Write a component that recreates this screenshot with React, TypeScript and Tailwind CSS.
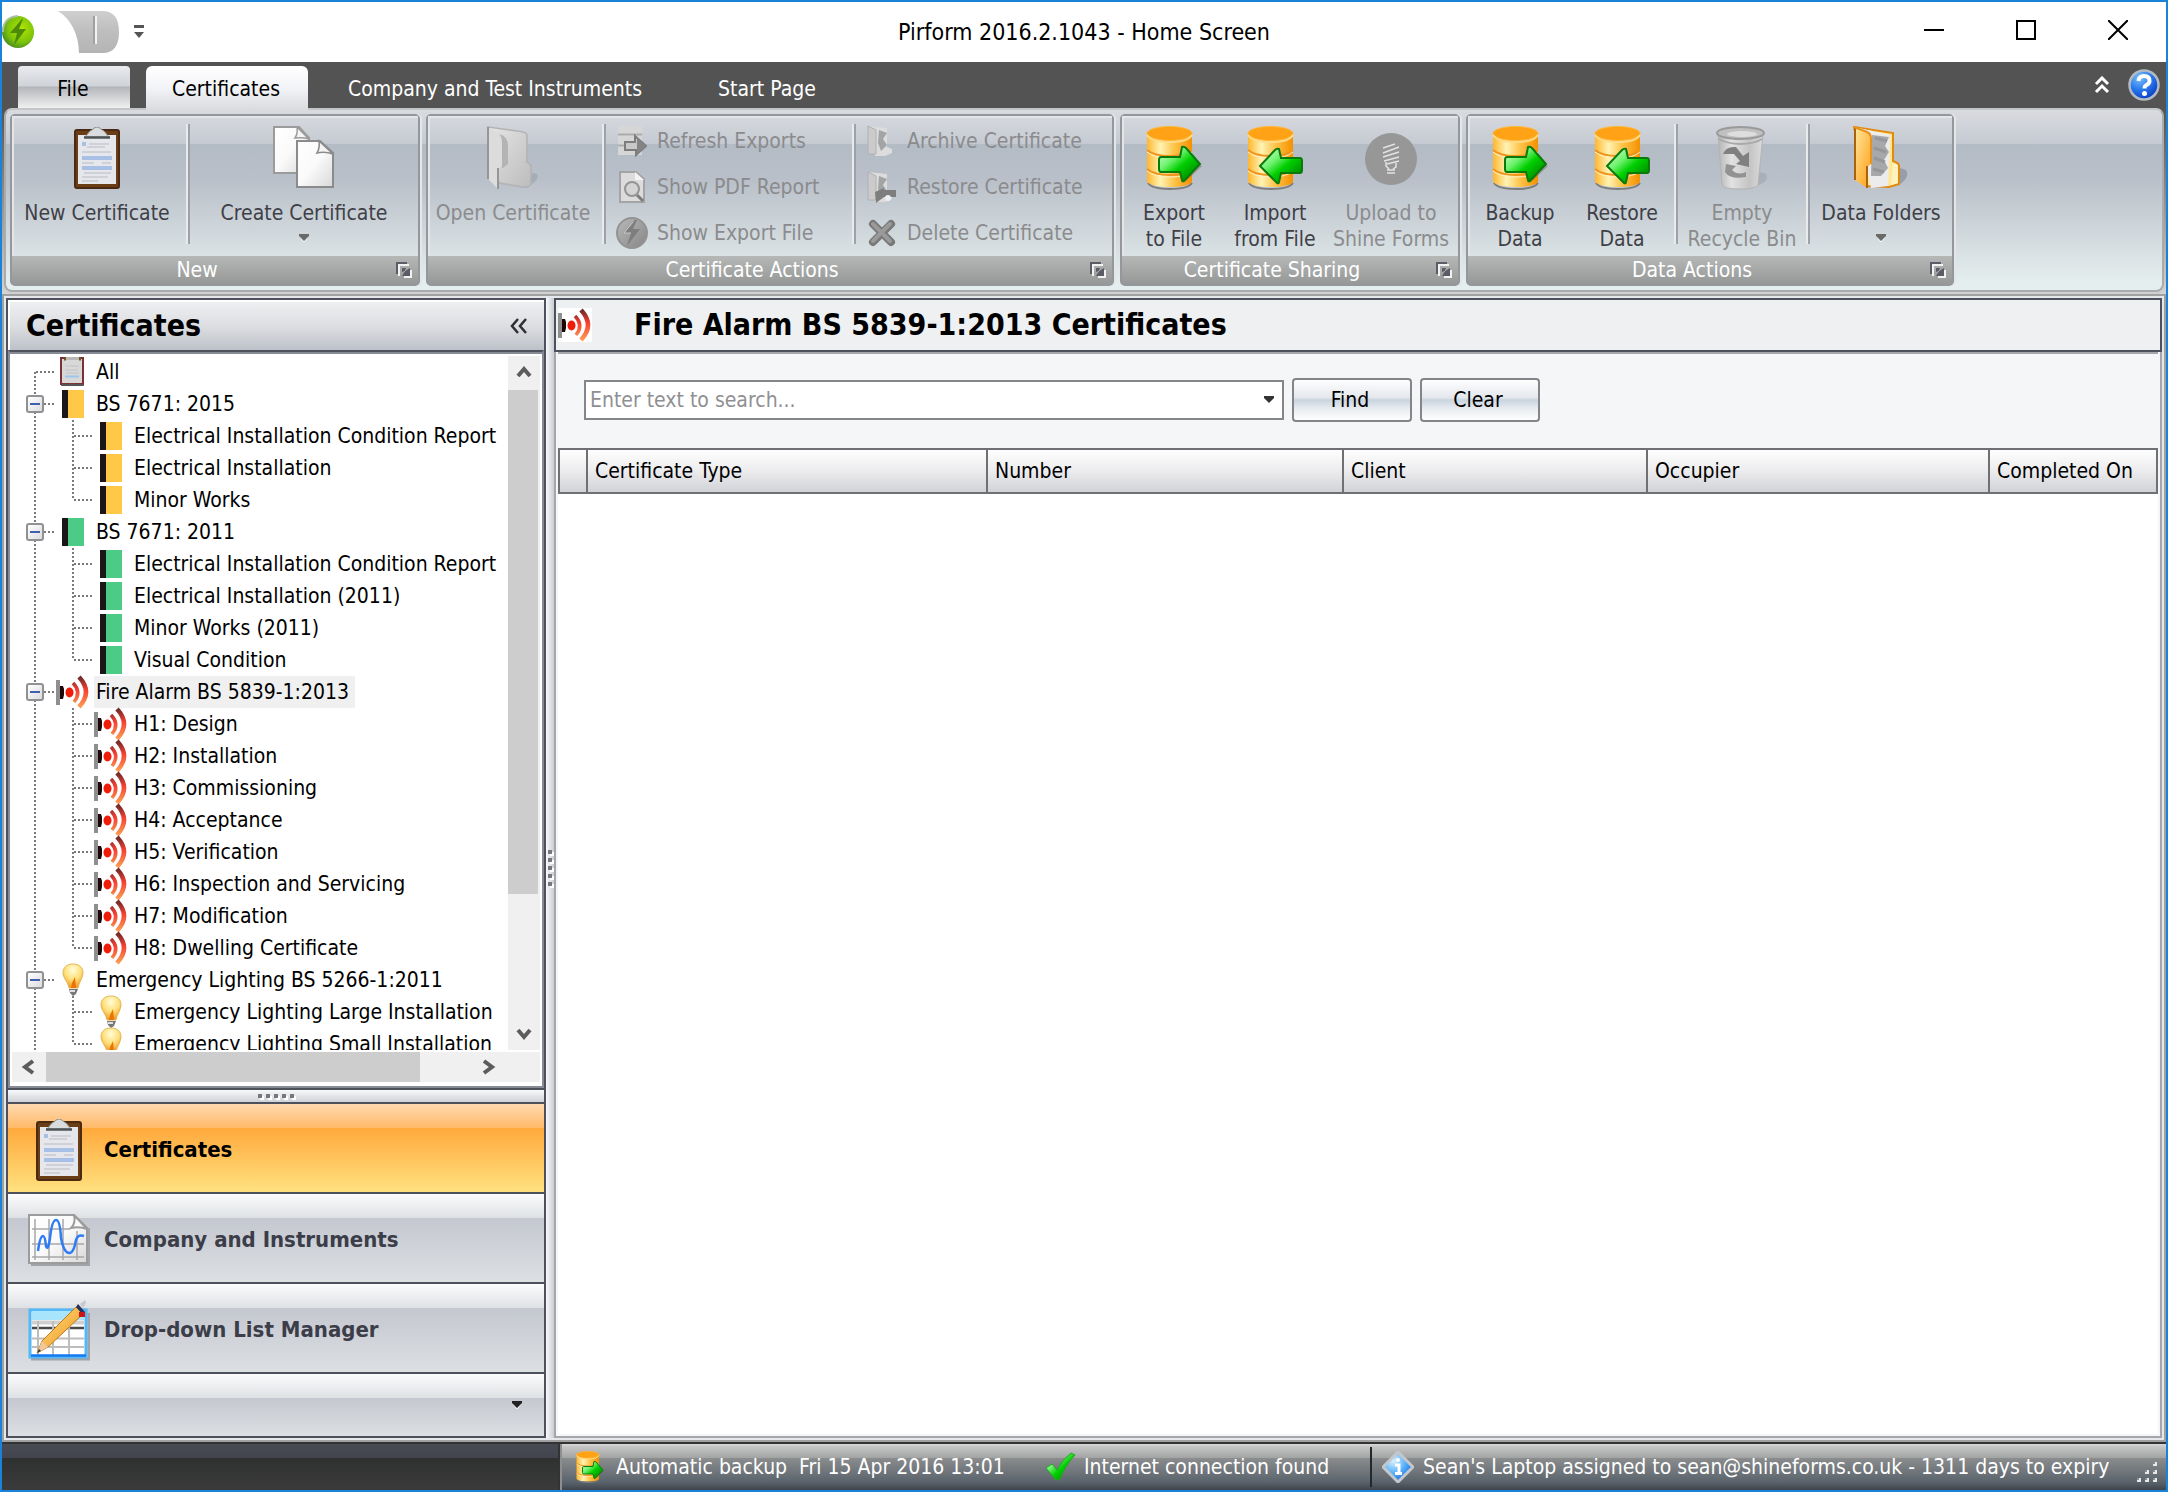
import type { ReactNode } from "react";

/* ---------- icons ---------- */

function Defs() {
  return (
    <svg width="0" height="0" className="absolute" aria-hidden="true">
      <defs>
        <linearGradient id="db" x1="0" x2="1" y1="0" y2="0">
          <stop offset="0" stopColor="#ffb62e" />
          <stop offset=".3" stopColor="#fff3b4" />
          <stop offset=".6" stopColor="#ffc44a" />
          <stop offset="1" stopColor="#f59000" />
        </linearGradient>
        <linearGradient id="green" x1="0" x2="1" y1="0" y2="1">
          <stop offset="0" stopColor="#e0ffe0" />
          <stop offset=".35" stopColor="#6cf26c" />
          <stop offset=".55" stopColor="#00cf00" />
          <stop offset="1" stopColor="#006a00" />
        </linearGradient>
        <linearGradient id="wave" gradientUnits="userSpaceOnUse" x1="0" x2="0" y1="2" y2="32">
          <stop offset="0" stopColor="#6a2a2a" />
          <stop offset=".4" stopColor="#f23c30" />
          <stop offset="1" stopColor="#ff9c52" />
        </linearGradient>
        <linearGradient id="paper" x1="0" x2="1" y1="0" y2="1">
          <stop offset="0" stopColor="#ffffff" />
          <stop offset=".5" stopColor="#fafafa" />
          <stop offset="1" stopColor="#d8d8d8" />
        </linearGradient>
        <linearGradient id="grey" x1="0" x2="1" y1="0" y2="1">
          <stop offset="0" stopColor="#e6e6e6" />
          <stop offset="1" stopColor="#bcbcbc" />
        </linearGradient>
        <linearGradient id="greydark" x1="0" x2="1" y1="0" y2="1">
          <stop offset="0" stopColor="#b9b9b9" />
          <stop offset="1" stopColor="#868686" />
        </linearGradient>
        <linearGradient id="bin" x1="0" x2="1" y1="0" y2="0">
          <stop offset="0" stopColor="#b4b4b4" />
          <stop offset=".3" stopColor="#e2e2e2" />
          <stop offset=".7" stopColor="#c4c4c4" />
          <stop offset="1" stopColor="#dcdcdc" />
        </linearGradient>
        <linearGradient id="folder" x1="0" x2="1" y1="0" y2="1">
          <stop offset="0" stopColor="#ffe9a0" />
          <stop offset="1" stopColor="#ff9d14" />
        </linearGradient>
        <radialGradient id="bulb" cx=".5" cy=".25" r=".8">
          <stop offset="0" stopColor="#fffdd8" />
          <stop offset=".5" stopColor="#ffe07a" />
          <stop offset="1" stopColor="#f08a10" />
        </radialGradient>
        <radialGradient id="info" cx=".35" cy=".3" r=".9">
          <stop offset="0" stopColor="#d8f2ff" />
          <stop offset=".5" stopColor="#4aa8f8" />
          <stop offset="1" stopColor="#0a3cc0" />
        </radialGradient>
        <radialGradient id="help" cx=".35" cy=".25" r=".8">
          <stop offset="0" stopColor="#7cc0f8" />
          <stop offset=".5" stopColor="#2a7cee" />
          <stop offset="1" stopColor="#0838c0" />
        </radialGradient>
        <radialGradient id="app" cx=".6" cy=".4" r=".7">
          <stop offset="0" stopColor="#b4e600" />
          <stop offset=".6" stopColor="#7cc40a" />
          <stop offset="1" stopColor="#3c7e28" />
        </radialGradient>
        <linearGradient id="qat" x1="0" x2="0" y1="0" y2="1">
          <stop offset="0" stopColor="#cfcfcf" />
          <stop offset=".45" stopColor="#bfbfbf" />
          <stop offset="1" stopColor="#b4b4b4" />
        </linearGradient>
        <linearGradient id="pencil" x1="0" x2="1" y1="0" y2="1">
          <stop offset="0" stopColor="#ffe680" />
          <stop offset="1" stopColor="#ee8c1a" />
        </linearGradient>
      </defs>
    </svg>
  );
}

function Clipboard({ w, h }: { w: number; h: number }) {
  return (
    <svg width={w} height={h} viewBox="0 0 46 62" aria-hidden="true">
      <rect x="1" y="3" width="44" height="58" rx="2" fill="#6b3d14" />
      <rect x="1" y="3" width="44" height="58" rx="2" fill="none" stroke="#4a2a12" strokeWidth="2" />
      <rect x="4" y="8" width="38" height="49" fill="#e6e7ec" />
      <path d="M11 10 L16 4 Q18 3 19 2 Q23 -2 27 2 Q28 3 30 4 L35 10 Z" fill="#d9dcdc" stroke="#8c8f8f" />
      <path d="M10 10.500 H36" stroke="#4f5454" strokeWidth="2.500" />
      <rect x="8" y="15" width="4" height="4" fill="#a9c0e2" />
      <path d="M15 17 H35 M13 20 H31 M8 25 H37 M8 36 H20 M28 36 H37 M10 46 H37 M8 50 H34 M8 54 H24" stroke="#d0d1d6" strokeWidth="2" />
      <path d="M8 31 H38 M8 41 H38" stroke="#a9c0e6" strokeWidth="4" />
    </svg>
  );
}

function SmallClipboard() {
  return (
    <svg width="26" height="30" viewBox="0 0 26 30" aria-hidden="true">
      <rect x="1" y="1" width="23" height="28" fill="#777" />
      <rect x="1" y="1" width="22" height="26" fill="#d8d8d8" stroke="#7a3232" strokeWidth="2" />
      <path d="M6 1.500 H19" stroke="#b8b8b8" strokeWidth="3" />
      <path d="M4 2 H6 M19 2 H21" stroke="#6a5a20" strokeWidth="3" />
      <path d="M5 9 H19 M5 13 H18 M6 16 H19" stroke="#c2c2c2" />
      <path d="M5 19.500 H19" stroke="#9cc8ec" strokeWidth="2" />
      <path d="M2 28 H23" stroke="#555" strokeWidth="2" />
    </svg>
  );
}

function Pages() {
  return (
    <svg width="62" height="64" viewBox="0 0 62 64" aria-hidden="true">
      <path d="M1 1 H26 L36 12 V47 H1 Z" fill="url(#paper)" stroke="#9b9b9b" strokeWidth="2" />
      <path d="M24 1 Q25 8 22 12 Q30 11 36 13 Z" fill="#f4f4f4" stroke="#9b9b9b" strokeWidth="1.500" />
      <path d="M24 15 H47 L60 27 V61 H24 Z" fill="url(#paper)" stroke="#8b8b8b" strokeWidth="2" />
      <path d="M46 15 Q47 22 44 27 Q52 25 60 28 Z" fill="#f4f4f4" stroke="#8b8b8b" strokeWidth="1.500" />
    </svg>
  );
}

function OpenFolder() {
  return (
    <svg width="52" height="64" viewBox="0 0 52 64" aria-hidden="true">
      <path d="M38 62 Q54 54 50 48 L42 46 Z" fill="#9aa0aa" opacity=".6" />
      <path d="M1 1 L30 5 Q40 6 40 9 V36 Q44 38 44 42 V58 Q42 62 36 61 L12 57 Z" fill="url(#grey)" stroke="#b2b2b2" strokeWidth="1.500" />
      <path d="M12 8 Q21 10 21 20 V38 L16 42 L12 40 Z" fill="#b4b4b4" />
      <path d="M1 1 L12 8 Q15 10 15 18 V40 L11 44 V63 L2 54 Z" fill="#dcdcdc" />
      <path d="M1 1 V53 M11 42 V63" stroke="#969696" strokeWidth="2" />
    </svg>
  );
}

function Database({ dir, w, h }: { dir: "right" | "left"; w: number; h: number }) {
  return (
    <svg width={w} height={h} viewBox="0 0 56 64" className="shrink-0" aria-hidden="true">
      <path d="M2 57 Q6 63 24 63 Q42 63 46 57" fill="none" stroke="#7c7c7c" strokeWidth="2" />
      <path d="M1 7 V56 Q6 61 24 61 Q42 61 46 56 V7 Z" fill="url(#db)" />
      <path d="M1 24 Q8 30 24 30 Q40 30 46 24 M1 43 Q8 49 24 49 Q40 49 46 43" fill="none" stroke="#f0941e" strokeWidth="2" />
      <path d="M1 26 Q8 32 24 32 Q40 32 46 26 M1 45 Q8 51 24 51 Q40 51 46 45" fill="none" stroke="#fff0c0" strokeWidth="1" />
      <ellipse cx="23.500" cy="7.500" rx="22.500" ry="7" fill="#ffa216" stroke="#ffb83c" />
      <path d="M1 9 Q6 16 24 16 Q42 16 46 9" fill="none" stroke="#ffdb88" strokeWidth="2" />
      {dir === "right" ? (
        <>
          <path d="M38 57 L56 40 L50 37" fill="#5a5a3a" opacity=".4" />
          <path d="M15 31 H34 L36 21 Q38 20 40 22 L54 38 L38 55 Q36 56 36 54 L34 46 H15 Q13 46 13 43 V34 Q13 31 15 31 Z" fill="url(#green)" stroke="#0b7a0b" strokeWidth="2" />
        </>
      ) : (
        <path d="M53 32 H34 L32 23 Q30 22 28 24 L13 40 L30 57 Q32 58 32 56 L34 47 H53 Q55 47 55 44 V35 Q55 32 53 32 Z" fill="url(#green)" stroke="#0b7a0b" strokeWidth="2" />
      )}
    </svg>
  );
}

function UploadBulb() {
  return (
    <svg width="54" height="64" viewBox="0 0 54 64" aria-hidden="true">
      <circle cx="27" cy="33" r="26" fill="#979797" />
      <g stroke="#e3e3e3" strokeWidth="1.500" fill="none">
        <path d="M19 22 L31 18 M19 27 L35 21 M19 31 L35 26 M20 35 L35 31 M23 38 L35 35" />
        <path d="M22 36 V40 L25 43 M32 37 V41 L29 43 M23 44 H31 M23 47 H31" />
      </g>
    </svg>
  );
}

function RecycleBin() {
  return (
    <svg width="52" height="64" viewBox="0 0 52 64" aria-hidden="true">
      <path d="M40 60 Q54 56 50 48 L44 46 Z" fill="#9aa0aa" opacity=".5" />
      <path d="M2 8 L6 59 Q8 63 24 63 Q40 63 42 59 L47 8 Z" fill="url(#bin)" stroke="#b4b4b4" />
      <ellipse cx="24.500" cy="7" rx="23.500" ry="6" fill="#c0c0c0" stroke="#9a9a9a" strokeWidth="2" />
      <ellipse cx="26" cy="8" rx="15" ry="3" fill="#dedede" />
      <path d="M3 13 Q12 18 24 18 Q38 18 46 13" fill="none" stroke="#a8a8a8" strokeWidth="2" />
      <path d="M7 28 Q10 20 20 21 L27 30 L33 26 V41 L20 38 L24 35 L18 28 Z" fill="#808080" />
      <path d="M10 38 L20 40 L16 44 Q22 50 30 46 L30 51 Q14 54 9 46 Z" fill="#929292" />
    </svg>
  );
}

function DataFolder() {
  return (
    <svg width="56" height="64" viewBox="0 0 56 64" aria-hidden="true">
      <path d="M44 60 Q58 52 53 44 L47 42 Z" fill="#8a9099" opacity=".7" />
      <path d="M1 1 L40 7 V35 Q46 37 46 40 V58 L36 61 L14 60 Z" fill="#ffe79a" stroke="#e08a10" strokeWidth="2" />
      <path d="M6 2 L37 9 L35 60 L18 62 Z" fill="#ececec" />
      <path d="M19 9 L36 11 L32 20 L36 26 L31 34 L35 42 L28 50 H18 Z" fill="#a6a8aa" />
      <path d="M22 12 L34 15 M21 22 L33 26 M21 32 L32 36 M20 43 L31 46" stroke="#95979a" strokeWidth="3" />
      <path d="M1 1 L14 6 Q18 8 18 12 V38 L14 41 V62 L2 54 Z" fill="url(#folder)" />
      <path d="M2 1 V54 M14 40 V62" stroke="#a8640c" strokeWidth="2" />
      <path d="M1 1 L14 6 Q18 8 18 12 V38" fill="none" stroke="#e8941c" strokeWidth="2" />
      <path d="M38 59 L40 38 Q44 37 45 40 V57 Z" fill="#fff2bc" />
    </svg>
  );
}

function RefreshExports() {
  return (
    <svg width="30" height="32" viewBox="0 0 30 32" aria-hidden="true">
      <path d="M1 1 H25 V30 H1 Z" fill="#d6d6d6" />
      <path d="M1 9.500 H25 M1 20.500 H25" stroke="#acacac" strokeWidth="2" />
      <path d="M8 17 H18 V11 L29 21 L19 30 V25 H8 Z" fill="#c8c8c8" stroke="#7c7c7c" strokeWidth="2" />
      <path d="M20 13 L29 21 L20 29 Z" fill="#848484" />
    </svg>
  );
}

function PdfReport() {
  return (
    <svg width="30" height="34" viewBox="0 0 30 34" aria-hidden="true">
      <path d="M3 2 H19 L27 9 V32 H3 Z" fill="#dcdcdc" stroke="#a4a4a4" strokeWidth="2" />
      <path d="M18 2 V10 H27 Z" fill="#f4f4f4" />
      <circle cx="15" cy="19" r="7" fill="#d4d4d4" stroke="#949494" strokeWidth="2" />
      <path d="M20 25 L26 31" stroke="#7c7c7c" strokeWidth="3" />
    </svg>
  );
}

function ExportFile() {
  return (
    <svg width="32" height="32" viewBox="0 0 32 32" aria-hidden="true">
      <circle cx="16" cy="16" r="15" fill="url(#greydark)" stroke="#939393" strokeWidth="2" />
      <path d="M19 3 L8 16 H15 L11 29 L24 12 H17 L21 3 Z" fill="#7e7e7e" />
      <path d="M17 5 L8 16 H15" fill="none" stroke="#c4c4c4" />
    </svg>
  );
}

function ArchiveFolder({ restore }: { restore?: boolean }) {
  return (
    <svg width="30" height="32" viewBox="0 0 30 32" aria-hidden="true">
      <path d="M1 1 L20 3 V22 L25 24 V28 L18 31 H8 Z" fill="#dcdcdc" />
      <path d="M1 1 L9 5 V29 H1 Z" fill="#cbcbcb" stroke="#b0b0b0" />
      <path d="M12 5 L20 8 L16 14 L20 20 L14 26 L11 18 Z" fill="#a2a4a6" />
      {restore && <path d="M8 21 L17 17 V19 H29 V26 H17 L9 32 Z" fill="#7e7e7e" />}
      {restore && <circle cx="21" cy="27" r="3" fill="#f0f0f0" />}
    </svg>
  );
}

function DeleteCross() {
  return (
    <svg width="28" height="28" viewBox="0 0 28 28" aria-hidden="true">
      <path d="M5 5 L23 23 M23 5 L5 23" stroke="#787878" strokeWidth="8" strokeLinecap="round" />
      <path d="M5 5 L22 22 M22 5 L5 22" stroke="#9a9a9a" strokeWidth="4" strokeLinecap="round" />
    </svg>
  );
}

function Alarm() {
  return (
    <svg width="34" height="34" viewBox="0 0 34 34" aria-hidden="true">
      <rect x="0" y="5" width="4" height="25" fill="#8f8f8f" />
      <path d="M4 11 H7 L8 14 V20 L7 24 H4 Z" fill="#1c0606" />
      <ellipse cx="13.500" cy="17.500" rx="4" ry="5" fill="#ee1c08" />
      <path d="M17 8 Q26 17 18 27" fill="none" stroke="url(#wave)" strokeWidth="3.500" />
      <path d="M23 2 Q37 17 23 32" fill="none" stroke="url(#wave)" strokeWidth="4.500" />
    </svg>
  );
}

function Bulb() {
  return (
    <svg width="24" height="34" viewBox="0 0 24 34" aria-hidden="true">
      <path d="M12 1 C18 1 22 4 22 10 C22 15 18 19 17 25 H8 C7 19 2 15 2 10 C2 4 6 1 12 1 Z" fill="url(#bulb)" stroke="#e0b860" />
      <path d="M11 20 L14 14 L15 25 H10 Z" fill="#e87408" />
      <path d="M8 26 H17 L15 31 L12 33 L9 30 Z" fill="#777" />
      <path d="M9 28 H14" stroke="#e0e0e0" strokeWidth="2" />
    </svg>
  );
}

function Chart() {
  return (
    <svg width="62" height="52" viewBox="0 0 62 52" aria-hidden="true">
      <path d="M3 51 H61 V14" fill="none" stroke="#a0a3a8" strokeWidth="3" />
      <path d="M1 1 H46 L59 14 V49 H1 Z" fill="url(#paper)" stroke="#9c9c9c" strokeWidth="2" />
      <path d="M46 1 Q48 9 43 14 Q52 12 59 15 Z" fill="#fafafa" stroke="#9c9c9c" strokeWidth="2" />
      <path d="M7 5 V46 M21 5 V46 M35 5 V46 M49 17 V46 M4 15 H42 M4 30 H56 M4 43 H56" stroke="#a8a8a8" strokeWidth="1.500" />
      <path d="M10 37 Q12 22 15 22 Q17 22 18 32 Q20 38 22 24 Q24 6 28 6 Q32 6 33 24 Q36 40 42 39 Q46 38 48 26 Q50 20 56 22" fill="none" stroke="#2e7cf6" strokeWidth="2.500" />
    </svg>
  );
}

function TablePencil() {
  return (
    <svg width="62" height="62" viewBox="0 0 62 62" aria-hidden="true">
      <path d="M3 60 H61 V14" fill="none" stroke="#a0a3a8" strokeWidth="3" />
      <rect x="2" y="11" width="56" height="47" fill="#fff" stroke="#52b8f8" strokeWidth="3" />
      <rect x="4" y="12" width="52" height="9" fill="#a8e4fc" />
      <path d="M4 23.500 H56" stroke="#cfcfcf" strokeWidth="4" />
      <path d="M4 29 H56" stroke="#4a4a4a" strokeWidth="2.500" />
      <path d="M4 39.500 H56 M4 48 H56 M10 22 V56 M25 22 V56 M41 22 V56" stroke="#bdbdbd" strokeWidth="2" />
      <path d="M3 56.500 H58" stroke="#1478f0" strokeWidth="2.500" />
      <path d="M9 54 L14 42 L48 8 L55 15 L20 48 Z" fill="url(#pencil)" stroke="#c07818" />
      <path d="M9 54 L14 42 L20 48 Z" fill="#f0c8a0" />
      <path d="M9 54 L11 50 L13 52 Z" fill="#333" />
      <path d="M48 8 L50 5 L57 13 L55 16 Z" fill="#28305e" />
      <path d="M51 13 H57 V18 H51 Z" fill="#cc1414" />
      <path d="M52 5 L57 1 L58 4 L55 9 Z" fill="#c8c8d0" />
    </svg>
  );
}

function Triangle({ fill, w = 10 }: { fill: string; w?: number }) {
  return (
    <svg width={w} height="8" viewBox="0 0 10 8" aria-hidden="true">
      <path d="M1 3 L5 8 L9 3" fill="none" stroke="#fff" opacity=".8" />
      <path d="M0 0 H10 V2 L5 7 L0 2 Z" fill={fill} />
    </svg>
  );
}

function Launcher() {
  return (
    <svg width="16" height="16" viewBox="0 0 16 16" aria-hidden="true">
      <path d="M3 14 V3 H13" fill="none" stroke="#f2f2f2" strokeWidth="2" />
      <path d="M1 12 V1 H11" fill="none" stroke="#5a5c66" strokeWidth="2" />
      <rect x="8" y="8" width="8" height="8" fill="#f2f2f2" />
      <path d="M6 6 H10 L9 9 L14 6 V14 H6 L9 9 L6 10 Z" fill="#5a5c66" />
    </svg>
  );
}

/* ---------- ribbon ---------- */

function Sep() {
  return <div className="mt-1.5 h-[120px] w-1 shrink-0 border-r-2 border-l-2 border-r-[#9da2aa] border-l-[#e8eaec]" />;
}

function Large({ icon, lines, width, disabled, menu }: { icon: ReactNode; lines: string[]; width: string; disabled?: boolean; menu?: boolean }) {
  return (
    <button
      type="button"
      disabled={disabled}
      className={`flex shrink-0 flex-col items-center gap-2.5 pt-2 leading-[26px] whitespace-nowrap ${width} ${disabled ? "text-[#8b8b8d]" : "text-[#3f3f47]"}`}
    >
      <span className="flex h-16 items-center">{icon}</span>
      <span className="flex flex-col items-center">
        {lines.map((l) => (
          <span key={l}>{l}</span>
        ))}
        {menu && (
          <span className="pt-2">
            <Triangle fill="#6a6a6a" />
          </span>
        )}
      </span>
    </button>
  );
}

function Small({ icon, label }: { icon: ReactNode; label: string }) {
  return (
    <button type="button" disabled className="flex h-[46px] items-center gap-[9px] whitespace-nowrap text-[#8b8b8d]">
      <span className="flex w-8 justify-center">{icon}</span>
      {label}
    </button>
  );
}

function Group({ title, width, children }: { title: string; width: string; children: ReactNode }) {
  return (
    <section className={`flex h-[172px] shrink-0 flex-col rounded-[5px] border-2 border-[#94979b] shadow-[2px_0_0_#e4e7ea] ${width}`}>
      <div className="flex h-[140px] border-t-2 border-l-2 border-[#e3e5e9]">{children}</div>
      <div className="flex h-7 items-center gap-3.5 bg-linear-to-b from-[#b5b8b7] to-[#969897] pr-1.5 text-white">
        <span className="flex-1 text-center">{title}</span>
        <button type="button" aria-label={`${title} options`}>
          <Launcher />
        </button>
      </div>
    </section>
  );
}

function Ribbon() {
  return (
    <div className="flex h-[184px] gap-1.5 rounded-[8px] border-2 border-[#a9abad] border-t-[#c3c5c7] bg-[linear-gradient(#d9dbdf_0px,#c5cad2_34px,#b3bbc5_34px,#b9c0c9_70px,#e5eeee_172px)] px-1 py-1 shadow-[0_2px_0_#d0d0d0]">
      <Group title="New" width="w-[410px]">
        <Large icon={<Clipboard w={46} h={62} />} lines={["New Certificate"]} width="w-[172px] pr-1.5" />
        <Sep />
        <Large icon={<Pages />} lines={["Create Certificate"]} width="w-[228px]" menu />
      </Group>
      <Group title="Certificate Actions" width="w-[688px]">
        <Large icon={<OpenFolder />} lines={["Open Certificate"]} width="w-[172px] pr-1.5" disabled />
        <Sep />
        <div className="flex w-[246px] shrink-0 flex-col pl-2.5">
          <Small icon={<RefreshExports />} label="Refresh Exports" />
          <Small icon={<PdfReport />} label="Show PDF Report" />
          <Small icon={<ExportFile />} label="Show Export File" />
        </div>
        <Sep />
        <div className="flex flex-col pl-2.5">
          <Small icon={<ArchiveFolder />} label="Archive Certificate" />
          <Small icon={<ArchiveFolder restore />} label="Restore Certificate" />
          <Small icon={<DeleteCross />} label="Delete Certificate" />
        </div>
      </Group>
      <Group title="Certificate Sharing" width="w-[340px]">
        <Large icon={<Database dir="right" w={56} h={64} />} lines={["Export", "to File"]} width="w-[100px]" />
        <Large icon={<Database dir="left" w={56} h={64} />} lines={["Import", "from File"]} width="w-[102px]" />
        <Large icon={<UploadBulb />} lines={["Upload to", "Shine Forms"]} width="w-[130px]" disabled />
      </Group>
      <Group title="Data Actions" width="w-[488px]">
        <Large icon={<Database dir="right" w={56} h={64} />} lines={["Backup", "Data"]} width="w-[100px]" />
        <Large icon={<Database dir="left" w={56} h={64} />} lines={["Restore", "Data"]} width="w-[104px]" />
        <Sep />
        <Large icon={<RecycleBin />} lines={["Empty", "Recycle Bin"]} width="w-[128px]" disabled />
        <Sep />
        <Large icon={<DataFolder />} lines={["Data Folders"]} width="w-[142px]" menu />
      </Group>
    </div>
  );
}

/* ---------- tree ---------- */

type Kind = "all" | "yellow" | "green" | "alarm" | "bulb";
type Row = { label: string; kind: Kind; level: 0 | 1; last?: boolean; selected?: boolean };

const rows: Row[] = [
  { label: "All", kind: "all", level: 0 },
  { label: "BS 7671: 2015", kind: "yellow", level: 0 },
  { label: "Electrical Installation Condition Report", kind: "yellow", level: 1 },
  { label: "Electrical Installation", kind: "yellow", level: 1 },
  { label: "Minor Works", kind: "yellow", level: 1, last: true },
  { label: "BS 7671: 2011", kind: "green", level: 0 },
  { label: "Electrical Installation Condition Report", kind: "green", level: 1 },
  { label: "Electrical Installation (2011)", kind: "green", level: 1 },
  { label: "Minor Works (2011)", kind: "green", level: 1 },
  { label: "Visual Condition", kind: "green", level: 1, last: true },
  { label: "Fire Alarm BS 5839-1:2013", kind: "alarm", level: 0, selected: true },
  { label: "H1: Design", kind: "alarm", level: 1 },
  { label: "H2: Installation", kind: "alarm", level: 1 },
  { label: "H3: Commissioning", kind: "alarm", level: 1 },
  { label: "H4: Acceptance", kind: "alarm", level: 1 },
  { label: "H5: Verification", kind: "alarm", level: 1 },
  { label: "H6: Inspection and Servicing", kind: "alarm", level: 1 },
  { label: "H7: Modification", kind: "alarm", level: 1 },
  { label: "H8: Dwelling Certificate", kind: "alarm", level: 1, last: true },
  { label: "Emergency Lighting BS 5266-1:2011", kind: "bulb", level: 0 },
  { label: "Emergency Lighting Large Installation", kind: "bulb", level: 1 },
  { label: "Emergency Lighting Small Installation", kind: "bulb", level: 1, last: true },
];

const vDots = "w-0.5 shrink-0 bg-[repeating-linear-gradient(to_bottom,#7b7b7b_0px,#7b7b7b_2px,transparent_2px,transparent_4px)]";
const hDots = "h-0.5 w-5 shrink-0 self-center bg-[repeating-linear-gradient(to_right,#7b7b7b_0px,#7b7b7b_2px,transparent_2px,transparent_4px)]";

function RowIcon({ kind }: { kind: Kind }) {
  if (kind === "all") return <SmallClipboard />;
  if (kind === "alarm") return <Alarm />;
  if (kind === "bulb") return <Bulb />;
  return <span className={`h-7 w-[22px] border-l-[6px] border-[#1b1718] ${kind === "yellow" ? "bg-[#ffc846]" : "bg-[#4bcb85]"}`} />;
}

function TreeRow({ row }: { row: Row }) {
  const top = row.level === 0;
  return (
    <li className="flex h-8 shrink-0 items-stretch">
      <span className="relative flex w-[30px] shrink-0 pl-2">
        <span className={`${vDots} ${row.kind === "all" ? "h-1/2 self-end" : "h-full"}`} />
        {top && <span className={hDots} />}
        {top && row.kind !== "all" && (
          <button
            type="button"
            aria-label={`Collapse ${row.label}`}
            className="absolute top-[7px] left-0 flex h-[18px] w-[18px] items-center justify-center rounded-[3px] border-2 border-[#8f9194] bg-linear-to-br from-white to-[#dcdcdc]"
          >
            <span className="h-0.5 w-2.5 bg-[#3f5fb0]" />
          </button>
        )}
      </span>
      {!top && (
        <span className="ml-4 flex w-[22px] shrink-0">
          <span className={`${vDots} ${row.last ? "h-1/2" : "h-full"}`} />
          <span className={hDots} />
        </span>
      )}
      <span className="mr-1 flex w-[34px] shrink-0 items-center justify-center">
        <RowIcon kind={row.kind} />
      </span>
      <a href="#" className={`flex items-center pr-1.5 pl-0.5 whitespace-nowrap ${row.selected ? "bg-[#f0f0f0]" : ""}`}>
        {row.label}
      </a>
    </li>
  );
}

function Arrow({ d }: { d: string }) {
  return (
    <svg width="16" height="16" viewBox="0 0 16 16" aria-hidden="true">
      <path d={d} fill="none" stroke="#5c5c5c" strokeWidth="4" />
    </svg>
  );
}

/* ---------- left navigation ---------- */

function NavButton({ icon, label, active }: { icon: ReactNode; label: string; active?: boolean }) {
  return (
    <button
      type="button"
      className={`flex h-[90px] w-full items-center border-b-2 border-[#4d515c] pt-1 text-left text-[22px] font-bold ${
        active
          ? "bg-[linear-gradient(#ffdab0_0px,#ffb968_24px,#ffa93c_24px,#ffde7b_84px)] text-black"
          : "bg-[linear-gradient(#fcfcfd_0px,#dee1e4_24px,#c4c7cf_24px,#dce0e3_88px)] text-[#3b3d49]"
      }`}
    >
      <span className="flex w-24 shrink-0 justify-center pl-1.5">{icon}</span>
      {label}
    </button>
  );
}

function Grip({ vertical }: { vertical?: boolean }) {
  return (
    <span className={`flex gap-1 ${vertical ? "flex-col" : ""}`}>
      {[0, 1, 2, 3, 4].map((i) => (
        <span key={i} className="h-1 w-1 bg-[#75777c] shadow-[2px_2px_0_#fff]" />
      ))}
    </span>
  );
}

function LeftPanel() {
  return (
    <aside className="flex w-[540px] shrink-0 flex-col border-2 border-[#4d515c] bg-white">
      <header className="flex h-[50px] shrink-0 items-center justify-between border-t-2 border-l-2 border-white bg-linear-to-b from-[#eeeff1] via-[#dcdee1] to-[#bfc1ca] pr-4 pl-4">
        <h2 className="text-[30px] leading-9 font-bold">Certificates</h2>
        <button type="button" aria-label="Collapse panel">
          <svg width="18" height="16" viewBox="0 0 18 16" aria-hidden="true">
            <path d="M8 1 L2 8 L8 15 M16 1 L10 8 L16 15" fill="none" stroke="#2e2e33" strokeWidth="2.500" />
          </svg>
        </button>
      </header>
      <div className="flex min-h-0 flex-1 flex-col border-2 border-[#858a94] border-t-[#4d515c] pt-0.5 shadow-[inset_0_2px_0_#858a94]">
        <div className="flex min-h-0 flex-1 pt-0.5">
          <ul className="flex min-h-0 flex-1 flex-col overflow-hidden pl-4">
            {rows.map((r, i) => (
              <TreeRow key={i} row={r} />
            ))}
          </ul>
          <div className="mr-0.5 flex w-8 shrink-0 flex-col items-center bg-[#f0f0f0]">
            <span className="flex h-[34px] shrink-0 items-center">
              <Arrow d="M2 11 L8 4 L14 11" />
            </span>
            <span className="w-full grow-[506] basis-0 border-r-2 border-[#f0f0f0] bg-[#cdcdcd]" />
            <span className="grow-[122] basis-0" />
            <span className="flex h-[34px] shrink-0 items-center">
              <Arrow d="M2 5 L8 12 L14 5" />
            </span>
          </div>
        </div>
        <div className="mx-0.5 mb-1 flex h-8 shrink-0 items-start border-t-2 border-white bg-[#f0f0f0]">
          <span className="flex h-full w-[34px] items-center justify-center">
            <Arrow d="M12 2 L4 8 L12 14" />
          </span>
          <span className="h-[30px] w-[374px] bg-[#cdcdcd]" />
          <span className="flex h-full flex-1 items-center justify-end pr-11">
            <Arrow d="M4 2 L12 8 L4 14" />
          </span>
        </div>
      </div>
      <div className="flex h-4 shrink-0 items-center justify-center border-y-2 border-[#4d515c] bg-linear-to-b from-[#f8f9fb] to-[#cfd2d8]">
        <Grip />
      </div>
      <nav className="shrink-0">
        <NavButton icon={<Clipboard w={48} h={62} />} label="Certificates" active />
        <NavButton icon={<Chart />} label="Company and Instruments" />
        <NavButton icon={<TablePencil />} label="Drop-down List Manager" />
        <div className="flex h-[62px] items-center justify-end bg-[linear-gradient(#fcfcfd_0px,#dee1e4_24px,#c4c7cf_24px,#dce0e3_62px)] pr-[22px]">
          <button type="button" aria-label="Configure buttons">
            <Triangle fill="#222" />
          </button>
        </div>
      </nav>
    </aside>
  );
}

/* ---------- right panel ---------- */

const columns: [string, string][] = [
  ["Certificate Type", "w-[400px]"],
  ["Number", "w-[356px]"],
  ["Client", "w-[304px]"],
  ["Occupier", "w-[342px]"],
  ["Completed On", ""],
];

const pushButton =
  "h-11 w-[120px] rounded-[4px] border-2 border-[#848588] bg-[linear-gradient(#fefefe,#e4e8ed_44%,#cad4de_50%,#e6eaef_70%,#ffffff)] pr-1";

function MainPanel() {
  return (
    <main className="flex min-w-0 flex-1 flex-col border-2 border-t-0 border-[#a5a6ab] bg-white">
      <header className="-mx-0.5 flex h-[54px] shrink-0 items-center gap-[42px] border-2 border-[#4d515c] bg-[#eff0f2] pl-0.5">
        <span className="bg-white">
          <Alarm />
        </span>
        <h1 className="text-[30px] leading-9 font-bold">Fire Alarm BS 5839-1:2013 Certificates</h1>
      </header>
      <div className="flex min-h-0 flex-1 flex-col border-2 border-t-0 border-[#f5f6f8]">
        <form className="flex h-24 shrink-0 items-center gap-2 border-t-2 border-[#a5a6ab] bg-[#f5f6f8] pb-0.5 pl-[26px]">
          <div className="flex h-10 w-[700px] items-center border-2 border-[#858689] bg-white pr-2">
            <input
              type="text"
              aria-label="Search"
              placeholder="Enter text to search..."
              className="h-full min-w-0 flex-1 bg-transparent pl-1 outline-none placeholder:text-[#8f8f93]"
            />
            <button type="button" aria-label="Recent searches">
              <Triangle fill="#333" />
            </button>
          </div>
          <button type="button" className={pushButton}>
            Find
          </button>
          <button type="button" className={pushButton}>
            Clear
          </button>
        </form>
        <table className="w-full table-fixed border-collapse">
          <thead>
            <tr className="h-11 bg-linear-to-b from-white via-[#ececee] to-[#d0d1d6]">
              <th aria-label="Indicator" className="w-7 border-2 border-[#6f7074]" />
              {columns.map(([c, w]) => (
                <th key={c} scope="col" className={`border-2 border-[#6f7074] pl-[7px] text-left font-normal whitespace-nowrap ${w}`}>
                  {c}
                </th>
              ))}
            </tr>
          </thead>
        </table>
      </div>
    </main>
  );
}

/* ---------- window ---------- */

function TitleBar() {
  const win = "flex h-full w-[92px] items-center justify-center pb-1";
  return (
    <header className="grid h-[60px] shrink-0 grid-cols-[1fr_auto_1fr] items-center bg-white">
      <div className="flex items-center">
        <svg width="32" height="34" viewBox="0 0 32 34" aria-hidden="true">
          <ellipse cx="16" cy="17" rx="16" ry="16" fill="url(#app)" />
          <path d="M16 1 Q1 2 1 17" fill="none" stroke="#a8c0a0" strokeWidth="2" />
          <path d="M20 4 L8 18 H15 L12 30 L24 14 H17 L21 4 Z" fill="#4c8a08" />
        </svg>
        <svg width="62" height="44" viewBox="0 0 62 44" className="ml-6" aria-hidden="true">
          <path d="M0 1 H46 Q61 2 61 22 Q61 42 46 43 H21 Q20 14 0 1 Z" fill="url(#qat)" />
          <path d="M38 6 V34" stroke="#f2f2f2" strokeWidth="2" />
          <path d="M36 6 V34" stroke="#a0a0a0" strokeWidth="2" />
        </svg>
        <button type="button" aria-label="Customize toolbar" className="ml-3.5">
          <svg width="10" height="14" viewBox="0 0 10 14" aria-hidden="true">
            <path d="M0 1.500 H10" stroke="#555" strokeWidth="3" />
            <path d="M0 7 H10 L5 13 Z" fill="#555" />
          </svg>
        </button>
      </div>
      <h1 className="text-[23px]">Pirform 2016.2.1043 - Home Screen</h1>
      <div className="flex h-full justify-end pr-0.5">
        <button type="button" aria-label="Minimize" className={win}>
          <svg width="20" height="20" viewBox="0 0 20 20">
            <path d="M0 10 H20" stroke="#000" strokeWidth="2" />
          </svg>
        </button>
        <button type="button" aria-label="Maximize" className={win}>
          <svg width="20" height="20" viewBox="0 0 20 20">
            <rect x="1" y="1" width="18" height="18" fill="none" stroke="#000" strokeWidth="2" />
          </svg>
        </button>
        <button type="button" aria-label="Close" className={win}>
          <svg width="20" height="20" viewBox="0 0 20 20">
            <path d="M0 0 L20 20 M20 0 L0 20" stroke="#000" strokeWidth="2" />
          </svg>
        </button>
      </div>
    </header>
  );
}

function TabBar() {
  return (
    <nav className="flex h-[46px] shrink-0 items-end bg-[#535353] pl-4 text-white">
      <button
        type="button"
        className="h-[42px] w-28 rounded-t-[4px] bg-[linear-gradient(#e9ebef_0px,#cfd2d7_20px,#b4b6ba_21px,#f0f0f1_42px)] pt-1 pr-0.5 text-black"
      >
        File
      </button>
      <button
        type="button"
        className="relative -mb-0.5 ml-4 h-11 w-[162px] rounded-t-[6px] bg-linear-to-b from-white via-[#f3f4f7] to-[#d9dbdf] pt-0.5 pr-0.5 text-black"
      >
        Certificates
      </button>
      <button type="button" className="ml-7 h-[42px] px-3 pt-1">
        Company and Test Instruments
      </button>
      <button type="button" className="ml-[52px] h-[42px] px-3 pt-1">
        Start Page
      </button>
      <span className="ml-auto flex h-[46px] items-center gap-[18px] pr-1.5">
        <button type="button" aria-label="Minimize ribbon">
          <svg width="16" height="18" viewBox="0 0 16 18">
            <path d="M2 8 L8 2 L14 8 M2 16 L8 10 L14 16" fill="none" stroke="#fff" strokeWidth="3" />
          </svg>
        </button>
        <button type="button" aria-label="Help">
          <svg width="32" height="32" viewBox="0 0 32 32">
            <circle cx="16" cy="16" r="14.500" fill="url(#help)" stroke="#b4bac4" strokeWidth="2.500" />
            <path d="M10.500 12 Q11 7 16 7 Q21.500 7 21.500 12 Q21.500 14.500 18.500 16 Q16.500 17 16.500 19.500" fill="none" stroke="#fff" strokeWidth="4" />
            <circle cx="16.500" cy="24.500" r="2.500" fill="#fff" />
          </svg>
        </button>
      </span>
    </nav>
  );
}

function StatusBar() {
  return (
    <footer className="flex h-12 shrink-0 border-t-2 border-[#333] bg-[linear-gradient(#484b54_0px,#42454d_14px,#2f3130_14px,#3b3b3b_46px)] text-white">
      <div className="w-[558px] shrink-0 border-r-2 border-[#333]" />
      <div className="flex flex-1 items-center border-l-2 border-[#8e8e8e] bg-[linear-gradient(#d8d8d8_0px,#c4c4c4_3px,#a2a3a3_14px,#8b8d8e_14px,#5a636c_38px,#3f444b_46px)] pl-3.5 whitespace-nowrap">
        <Database dir="right" w={28} h={32} />
        <span className="ml-3 w-[392px] shrink-0 whitespace-pre">Automatic backup  Fri 15 Apr 2016 13:01</span>
        <svg width="32" height="30" viewBox="0 0 32 30" className="ml-9 shrink-0" aria-hidden="true">
          <path d="M2 16 L8 12 L13 18 Q18 8 27 1 L31 3 Q22 12 16 27 L12 28 Z" fill="url(#green)" stroke="#22a822" />
        </svg>
        <span className="ml-2 w-[252px] shrink-0">Internet connection found</span>
        <span className="ml-[34px] h-10 w-0.5 shrink-0 bg-[#24272c]" />
        <svg width="32" height="32" viewBox="0 0 32 32" className="ml-2.5 shrink-0" aria-hidden="true">
          <path d="M16 1 L31 16 L16 31 L1 16 Z" fill="url(#info)" stroke="#c4c8cc" strokeWidth="3" strokeLinejoin="round" />
          <path d="M13 14 H17 V22 M13 22.500 H20" stroke="#fff" strokeWidth="3" fill="none" />
          <circle cx="16" cy="9" r="2" fill="#fff" />
        </svg>
        <span className="ml-[9px]">Sean&apos;s Laptop assigned to sean@shineforms.co.uk - 1311 days to expiry</span>
        <svg width="24" height="24" viewBox="0 0 24 24" className="mr-1.5 mb-1.5 ml-auto shrink-0 self-end" aria-hidden="true">
          <path
            d="M17 2 h4 v4 h-4z M9 10 h4 v4 h-4z M17 10 h4 v4 h-4z M1 18 h4 v4 h-4z M9 18 h4 v4 h-4z M17 18 h4 v4 h-4z"
            fill="#e8e8e8"
          />
          <path d="M17 2 h2 v2 h-2z M9 10 h2 v2 h-2z M17 10 h2 v2 h-2z M1 18 h2 v2 h-2z M9 18 h2 v2 h-2z M17 18 h2 v2 h-2z" fill="#8a8f94" />
        </svg>
      </div>
    </footer>
  );
}

export default function App() {
  return (
    <div className="flex h-screen flex-col border-2 border-[#1a82d8] bg-[#535353] font-['DejaVu_Sans_Condensed','DejaVu_Sans',sans-serif] text-[21px] leading-7 text-black">
      <Defs />
      <TitleBar />
      <TabBar />
      <div className="bg-linear-to-b from-[#535353] to-[#d4d4d4] px-0.5 pb-0.5">
        <Ribbon />
      </div>
      <div className="flex min-h-0 flex-1 border-2 border-[#a0a1a3] bg-[#e6e7ea] p-0.5">
        <LeftPanel />
        <div className="flex w-2 shrink-0 items-center justify-center bg-linear-to-r from-[#fafafc] to-[#c9ccd3]">
          <Grip vertical />
        </div>
        <MainPanel />
      </div>
      <StatusBar />
    </div>
  );
}
